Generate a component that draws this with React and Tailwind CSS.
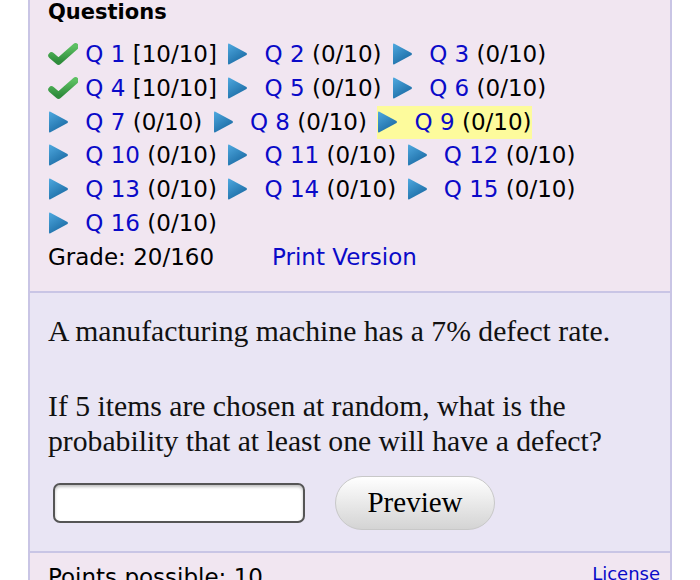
import React from 'react';

const questions = [
  { n: 1, score: '[10/10]', done: true },
  { n: 2, score: '(0/10)' },
  { n: 3, score: '(0/10)' },
  { n: 4, score: '[10/10]', done: true },
  { n: 5, score: '(0/10)' },
  { n: 6, score: '(0/10)' },
  { n: 7, score: '(0/10)' },
  { n: 8, score: '(0/10)' },
  { n: 9, score: '(0/10)', current: true },
  { n: 10, score: '(0/10)' },
  { n: 11, score: '(0/10)' },
  { n: 12, score: '(0/10)' },
  { n: 13, score: '(0/10)' },
  { n: 14, score: '(0/10)' },
  { n: 15, score: '(0/10)' },
  { n: 16, score: '(0/10)' },
];

const Check = () => (
  <svg width="30" height="22" viewBox="0 0 30 22" className="inline-block align-[-3px]">
    <defs>
      <linearGradient id="chk" x1="0" y1="0" x2="0" y2="1">
        <stop offset="0" stopColor="#5cbf62" />
        <stop offset="1" stopColor="#2f8c3c" />
      </linearGradient>
    </defs>
    <path d="M3.5 12.5 L10.5 18.5 L27.5 3.5" fill="none" stroke="url(#chk)" strokeWidth="6.5" strokeLinecap="round" strokeLinejoin="round" />
  </svg>
);

const Arrow = () => (
  <svg width="30" height="22" viewBox="0 0 30 22" className="inline-block align-[-3px]">
    <defs>
      <linearGradient id="tri" x1="0" y1="0" x2="0.6" y2="1">
        <stop offset="0" stopColor="#4fa9e0" />
        <stop offset="1" stopColor="#1a6aa3" />
      </linearGradient>
    </defs>
    <path d="M1 1.5 Q1 0 2.4 0.7 L19.5 10 Q20.5 11 19.5 12 L2.4 21.3 Q1 22 1 20.5 Z" fill="url(#tri)" />
  </svg>
);

const QItem = ({ q }) => (
  <span className={q.current ? 'inline-block whitespace-nowrap bg-[#fdfb9c]' : 'whitespace-nowrap'}>
    {q.done ? <Check /> : <Arrow />}{' '}
    <a className="text-[#0a0ac8]">Q {q.n}</a> {q.score}
  </span>
);

export default function App() {
  return (
    <div className="w-[700px] h-[580px] overflow-hidden bg-white">
      <div className="ml-[28px] w-[644px] border-x-2 border-[#c9c5e5]">
        {/* question list */}
        <div className="bg-[#f1e6f1] pl-[18px] pr-[12px] pb-[16px] font-['DejaVu_Sans',sans-serif] text-black">
          <div className="text-[21px] leading-[24px] font-bold">Questions</div>
          <div className="mt-[14px] text-[23px] leading-[33.8px]">
            {questions.map((q) => (
              <React.Fragment key={q.n}>
                <QItem q={q} />
                <span className="inline-block w-[3px]" />{' '}
              </React.Fragment>
            ))}
            <div className="flex">
              <span className="w-[224px]">Grade: 20/160</span>
              <a className="text-[#0a0ac8]">Print Version</a>
            </div>
          </div>
        </div>

        {/* question body */}
        <div className="border-t-2 border-[#c9c5e5] bg-[#e9e5f4] pl-[18px] pt-[21px] pb-[21px] font-['Liberation_Serif',serif] text-[29.7px] leading-[35px] text-[#111]">
          <p>A manufacturing machine has a 7% defect rate.</p>
          <p className="mt-[40px]">
            If 5 items are chosen at random, what is the probability that at least one will have a defect?
          </p>
          <div className="mt-[17px] flex items-center gap-[30px] pl-[5px]">
            <div className="h-[40px] w-[252px] rounded-[7px] border-2 border-[#555] bg-white shadow-[inset_0_2px_3px_rgba(0,0,0,0.25)]" />
            <button className="h-[54px] w-[160px] rounded-full border border-[#c8c8c8] bg-gradient-to-b from-white to-[#d4d4d4] font-['Liberation_Serif',serif] text-[29px] text-black">
              Preview
            </button>
          </div>
        </div>

        {/* footer */}
        <div className="border-t-2 border-[#c9c5e5] bg-[#f1e6f1] pl-[18px] pr-[10px] pt-[9px] flex items-start justify-between font-['DejaVu_Sans',sans-serif]">
          <span className="text-[23px] leading-[30px] text-black">Points possible: 10</span>
          <a className="text-[18px] leading-[24px] text-[#0a0ac8]">License</a>
        </div>
      </div>
    </div>
  );
}
